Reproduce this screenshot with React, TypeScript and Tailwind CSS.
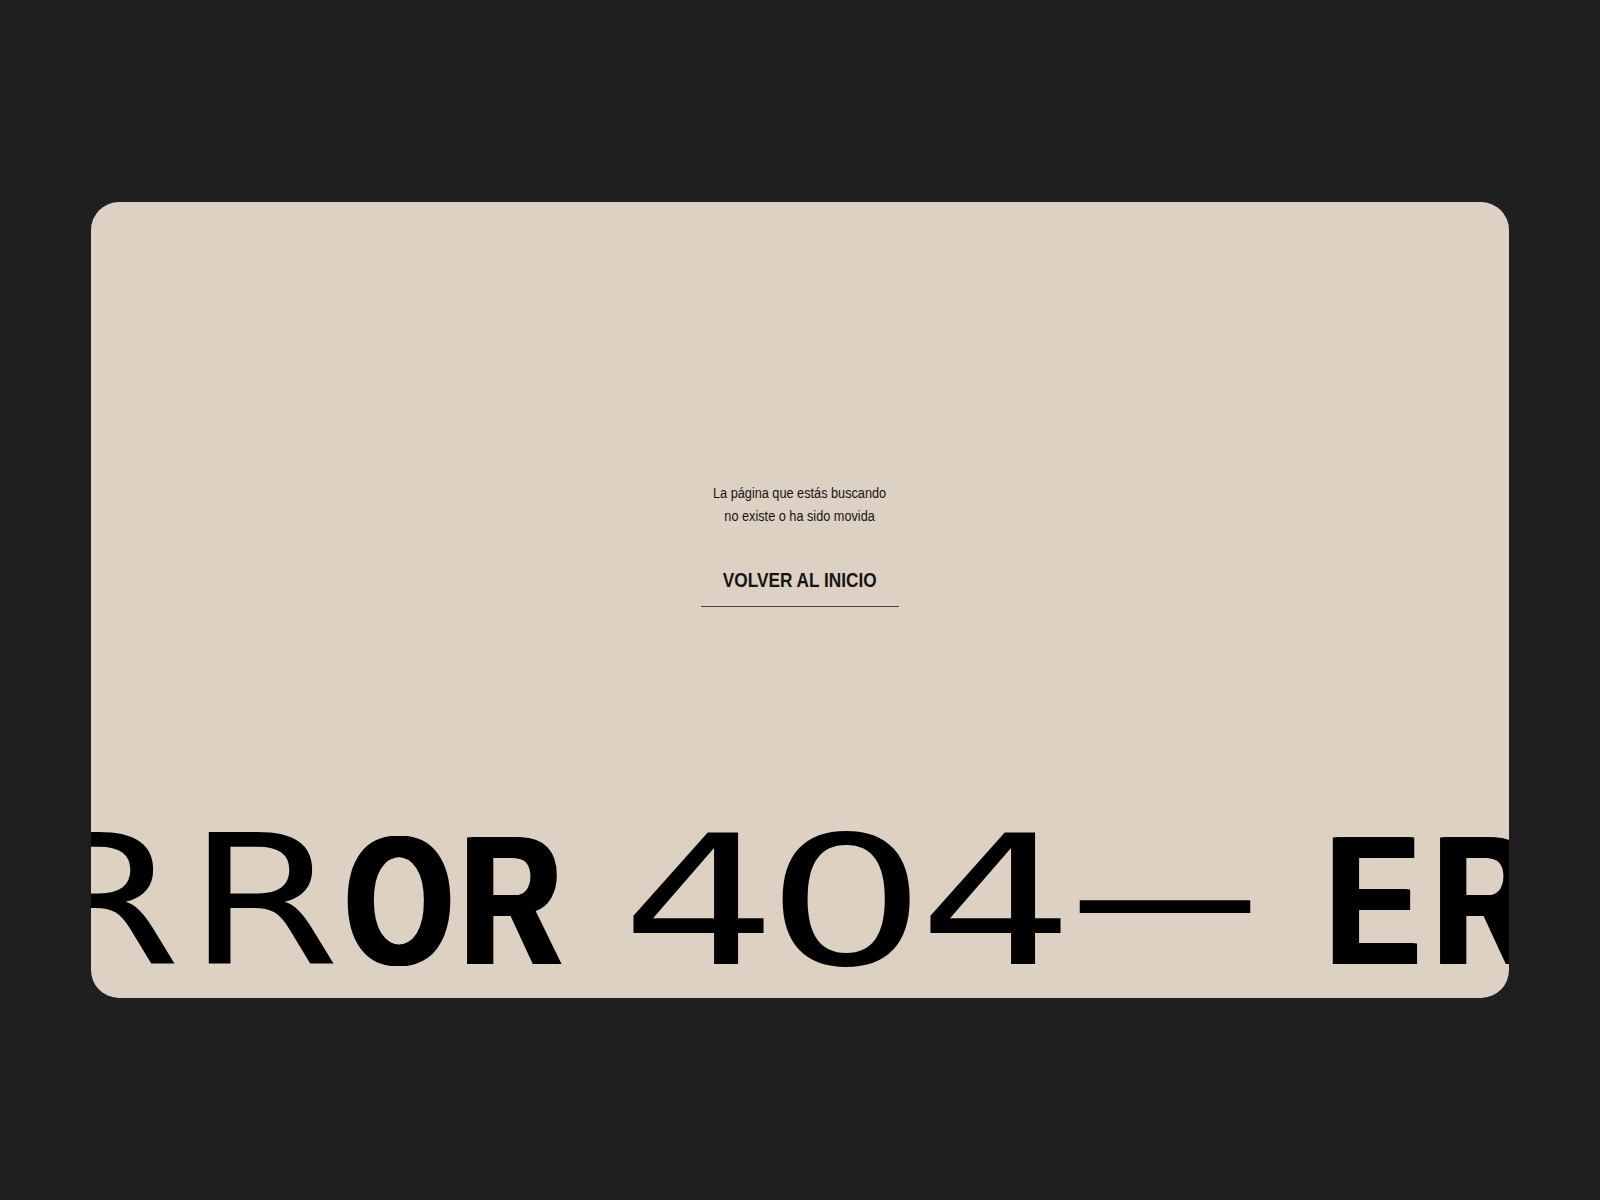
import React from 'react';

// Marquee glyphs: each slot is a zero-width anchor at the glyph's centre,
// ml = distance from the previous glyph centre.
type Glyph = { ch: string; slot: string; face: string };

const REG = "font-['DejaVu_Sans',sans-serif] font-normal text-[180px]";
// condensed heavy grotesk: Arial metrics squeezed, vertical stems thickened with side shadows
const BOLD =
  "font-['Liberation_Sans',Arial,sans-serif] font-bold text-[183px] scale-x-[0.76] [text-shadow:4px_0_0_#000,-4px_0_0_#000,2px_0_0_#000,-2px_0_0_#000]";
const NARROW = "font-['Liberation_Sans',Arial,sans-serif] scale-x-[0.82]";

const glyphs: Glyph[] = [
  { ch: 'E', slot: 'ml-[-114px]', face: BOLD },
  { ch: 'R', slot: 'ml-[128px]', face: `${REG} scale-x-[1.22]` },
  { ch: 'R', slot: 'ml-[159px]', face: `${REG} scale-x-[1.22]` },
  { ch: 'O', slot: 'ml-[135px]', face: BOLD },
  { ch: 'R', slot: 'ml-[112px]', face: BOLD },
  { ch: '4', slot: 'ml-[188.5px]', face: `${REG} scale-x-[1.36]` },
  { ch: '0', slot: 'ml-[147px]', face: `${REG} scale-x-[1.4]` },
  { ch: '4', slot: 'ml-[150px]', face: `${REG} scale-x-[1.36]` },
  { ch: '—', slot: 'ml-[168.5px]', face: `${REG} scale-x-[1.05] -translate-y-[8px]` },
  { ch: 'E', slot: 'ml-[208px]', face: BOLD },
  { ch: 'R', slot: 'ml-[111px]', face: BOLD },
];

export default function App() {
  return (
    <div className="min-h-screen w-full flex items-center justify-center bg-[#1f1f1f]">
      <main className="w-[1418px] h-[796px] rounded-[28px] bg-[#dcd1c2] overflow-hidden flex flex-col">
        <section className="flex-1 flex flex-col items-center pt-[279px] text-[#171512]">
          <p className={`text-center text-[15.5px] leading-[23px] ${NARROW}`}>
            La página que estás buscando
            <br />
            no existe o ha sido movida
          </p>
          <a
            href="#"
            className="mt-[41px] w-[198px] flex justify-center pb-[14px] border-b border-[#4a4540]"
          >
            <span className={`block shrink-0 text-[21px] leading-[24px] font-bold whitespace-nowrap ${NARROW}`}>
              VOLVER AL INICIO
            </span>
          </a>
        </section>

        <div className="flex items-baseline pb-[6px] text-black leading-none whitespace-nowrap">
          {glyphs.map((g, i) => (
            <span key={i} className={`flex w-0 shrink-0 justify-center ${g.slot}`}>
              <span className={`block leading-none ${g.face}`}>{g.ch}</span>
            </span>
          ))}
        </div>
      </main>
    </div>
  );
}
